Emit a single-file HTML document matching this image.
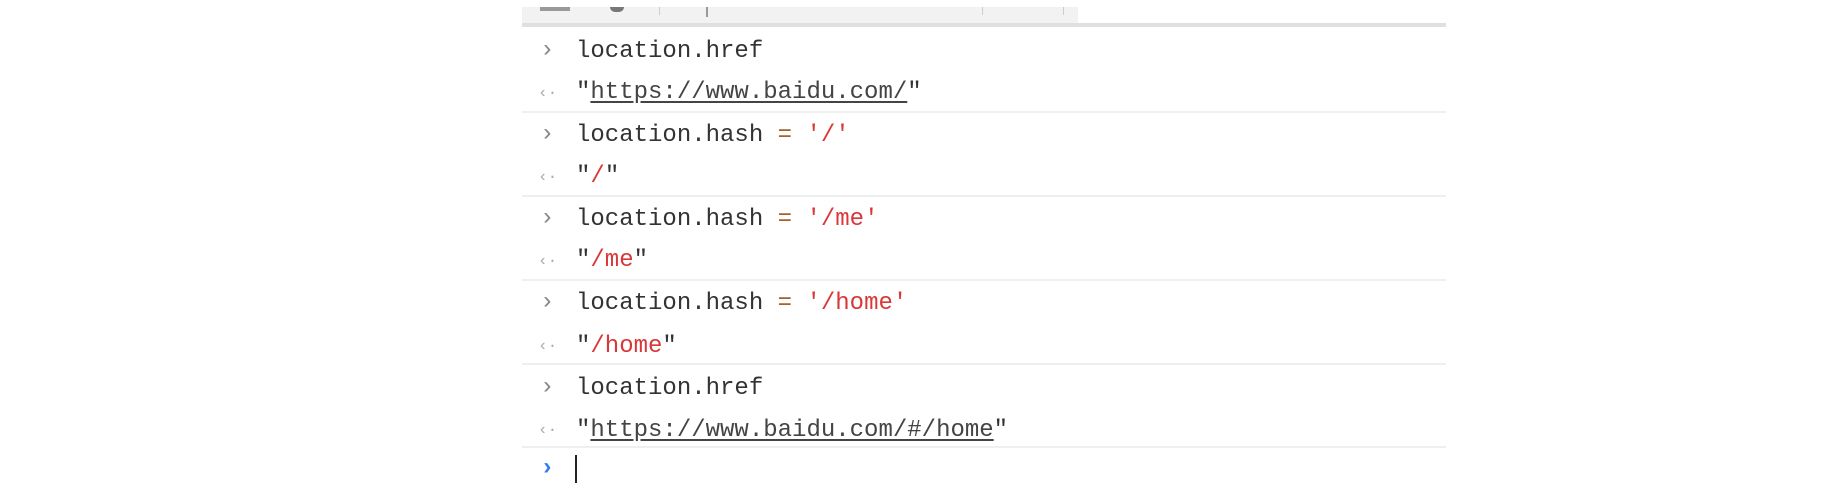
<!DOCTYPE html>
<html><head><style>
body{margin:0;width:1832px;height:499px;background:#fff;position:relative;overflow:hidden;font-family:"Liberation Mono",monospace;}
.tb{position:absolute;left:522px;top:7px;width:556px;height:17px;background:#f2f2f2;}
.tbl{position:absolute;left:522px;top:23px;width:924px;height:4px;background:#e0e0e0;}
.sep{position:absolute;left:522px;width:924px;height:2px;background:#efefef;}
.row{position:absolute;left:576px;font-size:24px;line-height:28px;color:#333;white-space:pre;}
.ar{position:absolute;left:540px;font-size:24px;line-height:28px;color:#888;}
.ar2{position:absolute;left:538px;font-size:16px;line-height:28px;color:#aaa;}
.r{color:#d93838;}
.o{color:#a5612a;}
u{text-decoration:underline;color:#444;text-underline-offset:3px;}
</style></head><body>
<div class="tb"></div>
<div style="position:absolute;left:540px;top:7px;width:30px;height:4px;background:#999"></div>
<div style="position:absolute;left:610px;top:7px;width:14px;height:5px;background:#777;border-radius:0 0 7px 7px"></div>
<div style="position:absolute;left:659px;top:7px;width:1px;height:8px;background:#ccc"></div>
<div style="position:absolute;left:706px;top:7px;width:2px;height:10px;background:#999"></div>
<div style="position:absolute;left:982px;top:7px;width:1px;height:8px;background:#ccc"></div>
<div style="position:absolute;left:1063px;top:7px;width:1px;height:8px;background:#ccc"></div>
<div class="tbl"></div>

<div class="ar" style="top:37px">›</div><div class="row" style="top:38px">location.href</div>
<div class="ar2" style="top:79px">‹·</div><div class="row" style="top:79px">"<u>https://www.baidu.com/</u>"</div>
<div class="sep" style="top:111px"></div>
<div class="ar" style="top:121px">›</div><div class="row" style="top:122px">location.hash <span class="o">=</span> <span class="r">'/'</span></div>
<div class="ar2" style="top:163px">‹·</div><div class="row" style="top:163px">"<span class="r">/</span>"</div>
<div class="sep" style="top:195px"></div>
<div class="ar" style="top:205px">›</div><div class="row" style="top:206px">location.hash <span class="o">=</span> <span class="r">'/me'</span></div>
<div class="ar2" style="top:247px">‹·</div><div class="row" style="top:247px">"<span class="r">/me</span>"</div>
<div class="sep" style="top:279px"></div>
<div class="ar" style="top:289px">›</div><div class="row" style="top:290px">location.hash <span class="o">=</span> <span class="r">'/home'</span></div>
<div class="ar2" style="top:332px">‹·</div><div class="row" style="top:333px">"<span class="r">/home</span>"</div>
<div class="sep" style="top:363px"></div>
<div class="ar" style="top:374px">›</div><div class="row" style="top:375px">location.href</div>
<div class="ar2" style="top:416px">‹·</div><div class="row" style="top:417px">"<u>https://www.baidu.com/#/home</u>"</div>
<div class="sep" style="top:446px"></div>
<div class="ar" style="top:455px;color:#367cf1;font-weight:bold">›</div>
<div style="position:absolute;left:575px;top:455px;width:2px;height:28px;background:#222"></div>
</body></html>
